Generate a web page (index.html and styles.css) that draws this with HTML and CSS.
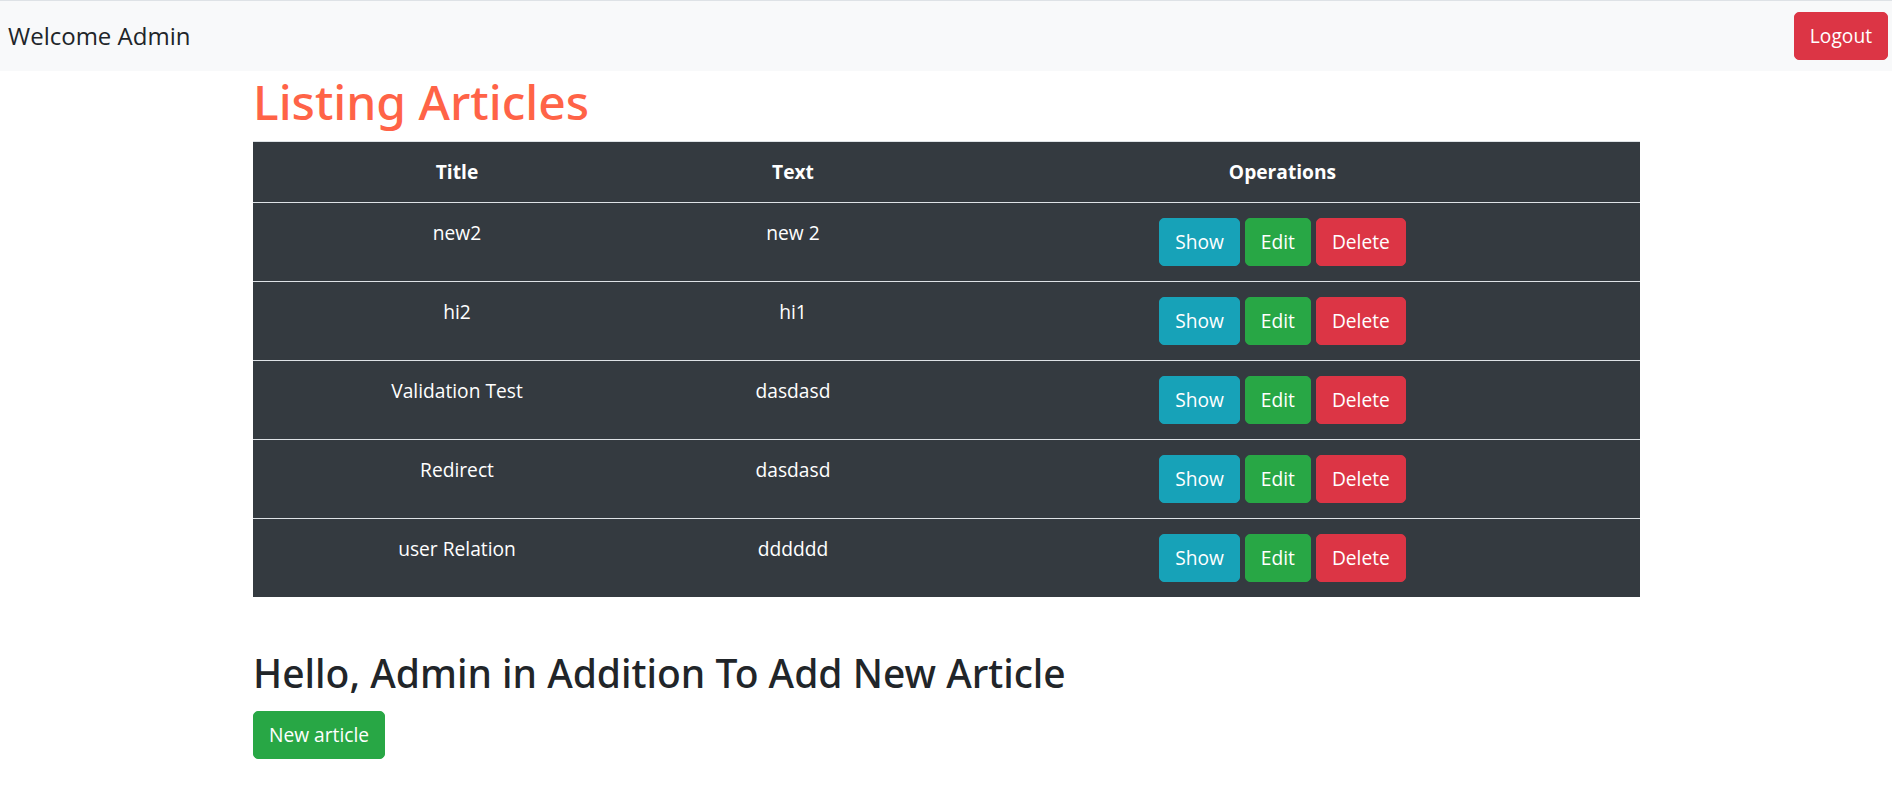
FILE: index.html
```html
<!DOCTYPE html>
<html lang="en">
<head>
<meta charset="utf-8">
<title>Listing Articles</title>
<link rel="stylesheet" href="styles.css">
</head>
<body>
<nav class="navbar">
  <span class="brand">Welcome Admin</span>
  <a class="btn btn-danger" href="#">Logout</a>
</nav>
<main class="container">
  <h1 class="page-title">Listing Articles</h1>
  <table class="articles">
    <thead>
      <tr>
        <th class="col-title">Title</th>
        <th class="col-text">Text</th>
        <th class="col-ops">Operations</th>
      </tr>
    </thead>
    <tbody>
      <tr>
        <td>new2</td>
        <td>new 2</td>
        <td><a class="btn btn-info" href="#">Show</a> <a class="btn btn-success" href="#">Edit</a> <a class="btn btn-danger" href="#">Delete</a></td>
      </tr>
      <tr>
        <td>hi2</td>
        <td>hi1</td>
        <td><a class="btn btn-info" href="#">Show</a> <a class="btn btn-success" href="#">Edit</a> <a class="btn btn-danger" href="#">Delete</a></td>
      </tr>
      <tr>
        <td>Validation Test</td>
        <td>dasdasd</td>
        <td><a class="btn btn-info" href="#">Show</a> <a class="btn btn-success" href="#">Edit</a> <a class="btn btn-danger" href="#">Delete</a></td>
      </tr>
      <tr>
        <td>Redirect</td>
        <td>dasdasd</td>
        <td><a class="btn btn-info" href="#">Show</a> <a class="btn btn-success" href="#">Edit</a> <a class="btn btn-danger" href="#">Delete</a></td>
      </tr>
      <tr>
        <td>user Relation</td>
        <td>dddddd</td>
        <td><a class="btn btn-info" href="#">Show</a> <a class="btn btn-success" href="#">Edit</a> <a class="btn btn-danger" href="#">Delete</a></td>
      </tr>
    </tbody>
  </table>
  <section class="add-section">
    <h2 class="add-title">Hello, Admin in Addition To Add New Article</h2>
    <a class="btn btn-success" href="#">New article</a>
  </section>
</main>
</body>
</html>
```
FILE: styles.css
```css
* {
  box-sizing: border-box;
}

html, body {
  margin: 0;
  padding: 0;
}

body {
  font-family: "Open Sans", "Noto Sans", "Liberation Sans", sans-serif;
  font-size: 19.2px;
  line-height: 30px;
  color: #212529;
  background: #fff;
}

.navbar {
  display: flex;
  align-items: center;
  justify-content: space-between;
  height: 71px;
  border-top: 1px solid #dee2e6;
  background: #f8f9fa;
  padding: 0 4px 0 8px;
}

.brand {
  font-size: 24px;
  line-height: 37.5px;
  color: #212529;
}

.btn {
  display: inline-block;
  font-size: 19.2px;
  line-height: 30px;
  padding: 8px 15px;
  border: 1px solid transparent;
  border-radius: 5px;
  color: #fff;
  text-decoration: none;
  text-align: center;
  vertical-align: middle;
  white-space: nowrap;
}

.btn-danger {
  background: #dc3545;
  border-color: #dc3545;
}

.btn-info {
  background: #17a2b8;
  border-color: #17a2b8;
}

.btn-success {
  background: #28a745;
  border-color: #28a745;
}

.container {
  width: 1388px;
  margin: 0 auto;
  padding-left: 1px;
}

.page-title {
  margin: 0 0 10px;
  padding-top: 1px;
  height: 60px;
  font-family: "Noto Sans", "Open Sans", sans-serif;
  font-size: 48px;
  line-height: 60px;
  font-weight: 500;
  color: #ff6347;
}

.articles {
  width: 100%;
  border-collapse: collapse;
  background: #343a40;
  color: #fff;
  margin-bottom: 20px;
}

.articles th,
.articles td {
  padding: 15px;
  text-align: center;
  vertical-align: top;
  border-top: 1px solid #dee2e6;
}

.articles th {
  font-weight: 700;
}

.col-title {
  width: 408px;
}

.col-text {
  width: 264px;
}

.add-section {
  padding-top: 32px;
}

.add-title {
  margin: 0 0 14px;
  font-family: "Noto Sans", "Open Sans", sans-serif;
  font-size: 39px;
  line-height: 48px;
  font-weight: 500;
  color: #212529;
}
```
